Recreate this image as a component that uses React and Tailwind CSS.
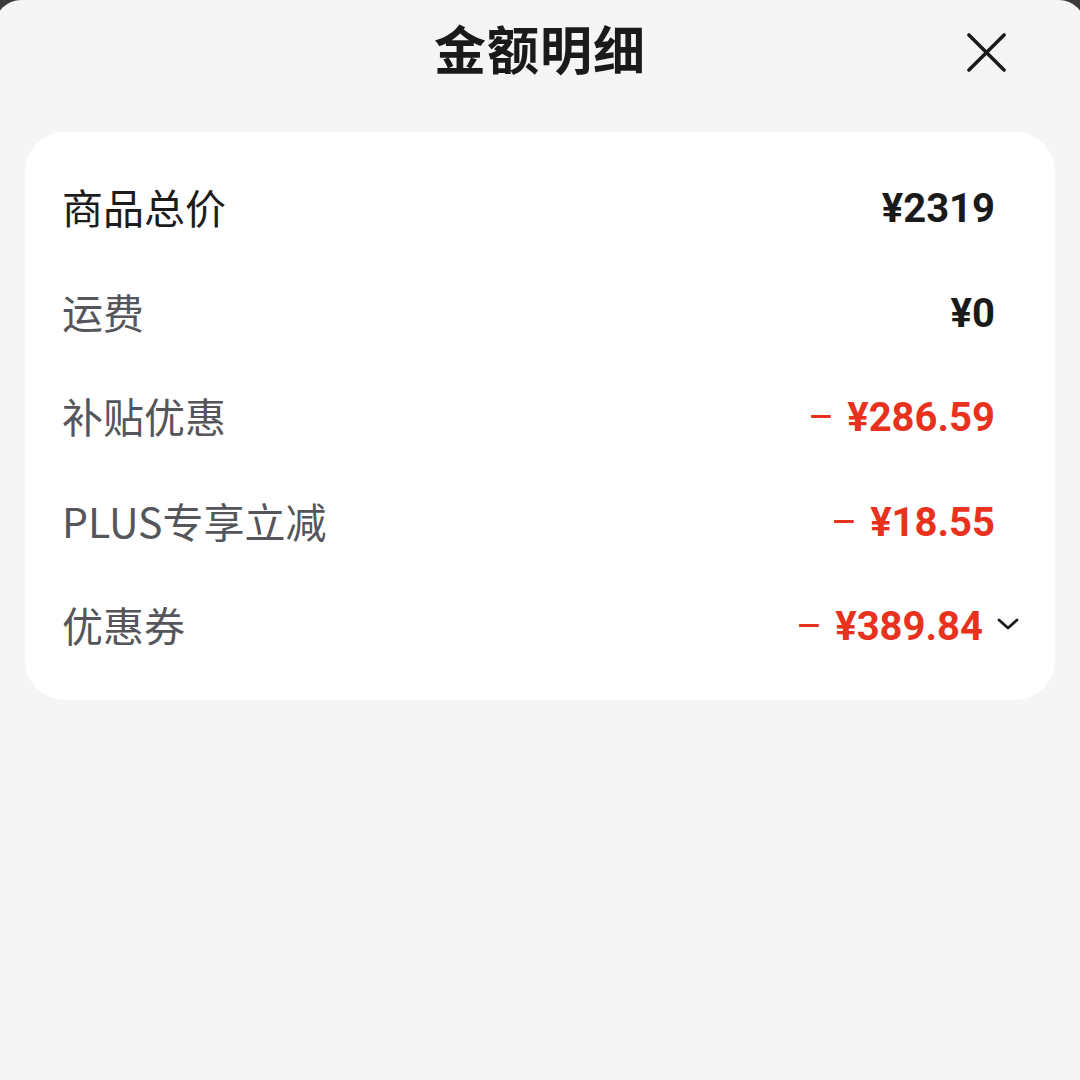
import React from "react";

const rows = [
	{ label: "商品总价", value: "¥2319", strong: true },
	{ label: "运费", value: "¥0" },
	{ label: "补贴优惠", value: "¥286.59", minus: true },
	{ label: "PLUS专享立减", value: "¥18.55", minus: true },
	{ label: "优惠券", value: "¥389.84", minus: true, more: true },
];

const cn = { fontFamily: '"Noto Sans CJK SC", "Noto Sans", sans-serif' };
const num = { fontFamily: 'Roboto, "Noto Sans CJK SC", sans-serif' };

const App = () => {
	return (
		<div className="w-[1080px] h-[1080px] bg-[#3a3a3a] overflow-hidden">
			<div className="h-full w-[1090px] -ml-[5px] bg-[#f5f5f5] rounded-t-[26px] flex flex-col" style={cn}>
				<header className="relative h-[106px] flex items-center justify-center">
					<h1 className="text-[52px] font-semibold text-[#1a1a1a] leading-none tracking-[1px] -mt-[10px]">
						金额明细
					</h1>
					<button className="absolute right-[79px] top-[33px] w-[39px] h-[39px]">
						<svg viewBox="0 0 40 40" className="w-full h-full" fill="none" stroke="#1a1a1a" strokeWidth="3.6" strokeLinecap="round">
							<path d="M2 2L38 38M38 2L2 38" />
						</svg>
					</button>
				</header>

				<section className="ml-[30px] mr-[30px] mt-[26px] bg-white rounded-[40px] pt-[25px] pb-[20px] pl-[37px] pr-[60px]">
					{rows.map((row, index) => (
						<div key={`row-${index}`} className="h-[104.5px] flex items-center justify-between">
							<span className={`text-[41px] leading-none -mt-[5px] ${row.strong ? "text-[#1c1c1c]" : "text-[#55565b]"}`}>
								{row.label}
							</span>
							<span className={`flex items-center text-[40px] font-bold leading-none ${row.more ? "-mr-[24px]" : ""}`} style={num}>
								{row.minus && <span className="text-[#e8321e] mr-[13px] font-normal">–</span>}
								<span className={row.minus ? "text-[#e8321e]" : "text-[#1a1a1a]"}>{row.value}</span>
								{row.more && (
									<svg viewBox="0 0 22 12" className="ml-[14px] -mt-[6px] w-[22px] h-[12px]" fill="none" stroke="#1a1a1a" strokeWidth="2.8" strokeLinecap="round" strokeLinejoin="round">
										<path d="M2 2L11 10L20 2" />
									</svg>
								)}
							</span>
						</div>
					))}
				</section>
			</div>
		</div>
	);
};

export default App;
